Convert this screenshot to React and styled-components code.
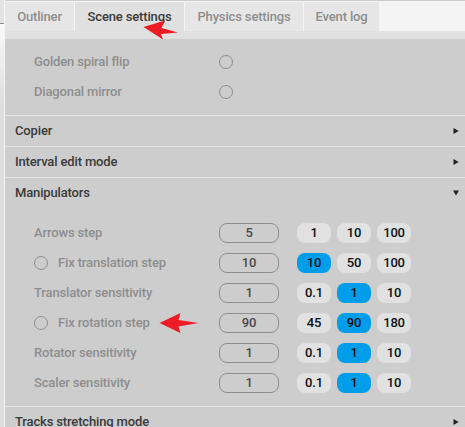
import React, { useState } from 'react'
import styled, { createGlobalStyle, css } from 'styled-components'

const GlobalStyle = createGlobalStyle`
*{
    box-sizing: border-box;
}
body{
    margin: 0;
    overflow: hidden;
    background-color: #cdcdcd;
    font-family: Roboto, "Liberation Sans", sans-serif;
    font-size: 13px;
    font-weight: 500;
    letter-spacing: -0.15px;
}
button{
    font: inherit;
    letter-spacing: inherit;
    cursor: pointer;
}
`
const Window = styled.div`
    display: flex;
    width: 465px;
    height: 427px;
    overflow: hidden;
`
const Gutter = styled.div`
    display: flex;
    flex-direction: column;
    flex: 0 0 5px;
    border-right: 1px solid #f4f4f4;
`
const GutterTop = styled.div`
    height: 24px;
    background-color: #e3e3e3;
    border-bottom: 1px solid #8c8c8c;
`
const GutterBody = styled.div`
    flex: 1;
    background: linear-gradient(#fafafa, #dedede 80px);
`
const Panel = styled.div`
    flex: 1;
    min-width: 0;
    border-top: 1px solid #cdcdcd;
`
const TabBar = styled.div`
    display: flex;
    height: 30px;
    padding-top: 1px;
    background-color: #f4f4f4;
`
const Tab = styled.button`
    flex: 0 0 ${props => props.$width}px;
    padding: 0;
    border: none;
    border-right: 1px solid #f4f4f4;
    line-height: 29px;
    white-space: nowrap;
    color: ${props => (props.$active ? '#3a3a3a' : '#8e8e8e')};
    background-color: ${props => (props.$active ? '#e0e0e0' : '#e6e6e6')};
`
const TabEdge = styled.div`
    height: 8px;
    background-color: #e0e0e0;
`
const Section = styled.section`
    border-bottom: 1px solid #e4e4e4;
`
const SectionHeader = styled.div`
    display: flex;
    align-items: center;
    justify-content: space-between;
    height: 30px;
    padding: 0 6px 1px 10px;
    color: #3a3a3a;
`
const Rows = styled.div`
    padding: ${props => props.$top}px 0 8px 29px;
`
const Row = styled.div`
    display: flex;
    align-items: center;
    height: 30px;
`
const Label = styled.div`
    display: flex;
    align-items: center;
    gap: 10px;
    width: 185px;
    height: 30px;
    color: #8e8e8e;
`
const LabelText = styled.span`
    padding-bottom: 1px;
`
const Radio = styled.span`
    width: 14px;
    height: 14px;
    border: 1px solid #8e8e8e;
    border-radius: 50%;
`
const pill = css`
    display: flex;
    align-items: center;
    justify-content: center;
    height: 20px;
    padding: 0 0 1px;
    border-radius: 8px;
`
const Value = styled.div`
    ${pill}
    width: 60px;
    margin-right: 18px;
    border: 1px solid #8e8e8e;
    color: #4a4a4a;
`
const Presets = styled.div`
    display: flex;
    gap: 6px;
`
const Preset = styled.button`
    ${pill}
    width: 34px;
    border: none;
    color: #101010;
    background-color: ${props => (props.$active ? '#009eea' : '#e1e1e1')};
`
const Caret = styled.svg`
    display: block;
    width: 6px;
    height: 6px;
    fill: #222;
`
const Pointer = styled.svg`
    position: absolute;
    left: ${props => props.$x}px;
    top: ${props => props.$y}px;
    width: ${props => props.$w}px;
    height: ${props => props.$h}px;
    fill: #ed1c24;
    pointer-events: none;
`

const tabs = [
    { name: 'Outliner', width: 70 },
    { name: 'Scene settings', width: 110 },
    { name: 'Physics settings', width: 119 },
    { name: 'Event log', width: 76 },
]

const manipulators = [
    { name: 'Arrows step', value: '5', presets: ['1', '10', '100'] },
    { name: 'Fix translation step', value: '10', presets: ['10', '50', '100'], radio: true },
    { name: 'Translator sensitivity', value: '1', presets: ['0.1', '1', '10'] },
    { name: 'Fix rotation step', value: '90', presets: ['45', '90', '180'], radio: true },
    { name: 'Rotator sensitivity', value: '1', presets: ['0.1', '1', '10'] },
    { name: 'Scaler sensitivity', value: '1', presets: ['0.1', '1', '10'] },
]

const Header = ({ title, open }) => (
    <SectionHeader>
        {title}
        <Caret viewBox="0 0 6 6">
            <path d={open ? 'M0 0.5H6L3 5.5Z' : 'M0.5 0L5.7 3L0.5 6Z'} />
        </Caret>
    </SectionHeader>
)

const ManipulatorRow = ({ item }) => {
    const [value, setValue] = useState(item.value)
    return (
        <Row>
            <Label>{item.radio && <Radio />}<LabelText>{item.name}</LabelText></Label>
            <Value>{value}</Value>
            <Presets>
                {item.presets.map(preset => (
                    <Preset key={preset} $active={preset === value} onClick={() => setValue(preset)}>{preset}</Preset>
                ))}
            </Presets>
        </Row>
    )
}

const App = () => {
    const [activeTab, setActiveTab] = useState('Scene settings')
    return (
        <>
        <GlobalStyle/>
        <Window>
            <Gutter>
                <GutterTop/>
                <GutterBody/>
            </Gutter>
            <Panel>
                <TabBar>
                    {tabs.map(tab => (
                        <Tab key={tab.name} $width={tab.width} $active={tab.name === activeTab} onClick={() => setActiveTab(tab.name)}>{tab.name}</Tab>
                    ))}
                </TabBar>
                <TabEdge/>
                <Section>
                    <Rows $top={8}>
                        <Row><Label><LabelText>Golden spiral flip</LabelText></Label><Radio/></Row>
                        <Row><Label><LabelText>Diagonal mirror</LabelText></Label><Radio/></Row>
                    </Rows>
                </Section>
                <Section><Header title="Copier"/></Section>
                <Section><Header title="Interval edit mode"/></Section>
                <Section>
                    <Header title="Manipulators" open/>
                    <Rows $top={10}>
                        {manipulators.map(item => <ManipulatorRow key={item.name} item={item}/>)}
                    </Rows>
                </Section>
                <Section><Header title="Tracks stretching mode"/></Section>
            </Panel>
        </Window>
        <Pointer $x={143} $y={19} $w={36} $h={21} viewBox="0 0 36 21">
            <path d="M0.5 8L22 1.5L18.5 9L35 13.5L18 15L20 20.5Z" />
        </Pointer>
        <Pointer $x={159} $y={312} $w={40} $h={22} viewBox="0 0 40 22">
            <path d="M0.5 11L21.5 1L19.5 8L39.5 11L19.5 14.5L21.5 21Z" />
        </Pointer>
        </>
    )
}

export default App
